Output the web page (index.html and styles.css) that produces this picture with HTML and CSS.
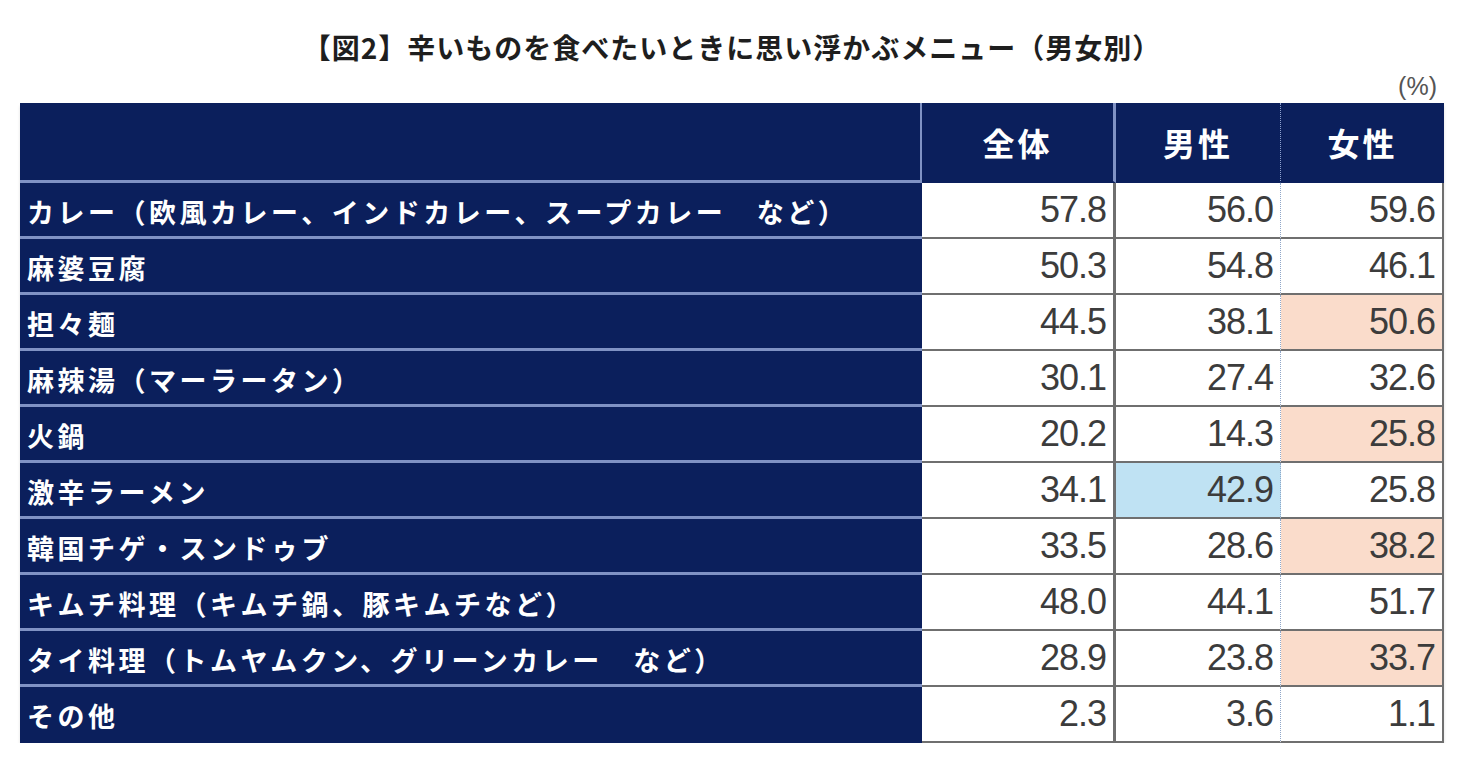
FILE: index.html
```html
<!DOCTYPE html>
<html lang="ja">
<head>
<meta charset="utf-8">
<title>辛いものを食べたいときに思い浮かぶメニュー（男女別）</title>
<link rel="stylesheet" href="styles.css">
</head>
<body>
<div class="page">
  <h1 class="title">【図2】辛いものを食べたいときに思い浮かぶメニュー（男女別）</h1>
  <div class="unit">(%)</div>
  <div class="grid">
    <div class="hd hd-label"></div>
    <div class="hd hd-all">全体</div>
    <div class="hd hd-m">男性</div>
    <div class="hd hd-f">女性</div>

    <div class="lb">カレー（欧風カレー、インドカレー、スープカレー　など）</div>
    <div class="nm all">57.8</div><div class="nm m">56.0</div><div class="nm f">59.6</div>

    <div class="lb">麻婆豆腐</div>
    <div class="nm all">50.3</div><div class="nm m">54.8</div><div class="nm f">46.1</div>

    <div class="lb">担々麺</div>
    <div class="nm all">44.5</div><div class="nm m">38.1</div><div class="nm f hi-f">50.6</div>

    <div class="lb">麻辣湯（マーラータン）</div>
    <div class="nm all">30.1</div><div class="nm m">27.4</div><div class="nm f">32.6</div>

    <div class="lb">火鍋</div>
    <div class="nm all">20.2</div><div class="nm m">14.3</div><div class="nm f hi-f">25.8</div>

    <div class="lb">激辛ラーメン</div>
    <div class="nm all">34.1</div><div class="nm m hi-m">42.9</div><div class="nm f">25.8</div>

    <div class="lb">韓国チゲ・スンドゥブ</div>
    <div class="nm all">33.5</div><div class="nm m">28.6</div><div class="nm f hi-f">38.2</div>

    <div class="lb">キムチ料理（キムチ鍋、豚キムチなど）</div>
    <div class="nm all">48.0</div><div class="nm m">44.1</div><div class="nm f">51.7</div>

    <div class="lb">タイ料理（トムヤムクン、グリーンカレー　など）</div>
    <div class="nm all">28.9</div><div class="nm m">23.8</div><div class="nm f hi-f">33.7</div>

    <div class="lb last">その他</div>
    <div class="nm all">2.3</div><div class="nm m">3.6</div><div class="nm f">1.1</div>
  </div>
</div>
</body>
</html>
```

FILE: styles.css
```css
html, body {
  margin: 0;
  padding: 0;
  background: #ffffff;
}

.page {
  width: 1424px;
  padding: 29px 0 0 20px;
  font-family: "Noto Sans CJK JP", "Noto Sans", sans-serif;
}

.title {
  margin: 0;
  font-size: 28px;
  line-height: 36px;
  font-weight: 700;
  letter-spacing: 1px;
  color: #1e1e1e;
  text-align: center;
}

.unit {
  margin-top: 7px;
  height: 31px;
  padding-right: 7px;
  text-align: right;
  font-family: "Liberation Sans", Arial, sans-serif;
  font-size: 25px;
  line-height: 28px;
  color: #555555;
}

.grid {
  display: grid;
  grid-template-columns: 902px 194px 165px 163px;
  grid-template-rows: 80px repeat(10, 56px);
  box-shadow: 0 3px 3px rgba(0, 0, 0, 0.12);
}

.hd {
  box-sizing: border-box;
  background: #0b1f5c;
  color: #ffffff;
  font-size: 32px;
  font-weight: 700;
  letter-spacing: 3px;
  display: flex;
  align-items: center;
  justify-content: center;
  border-bottom: 2px solid #0b1f5c;
}

.hd-label {
  border-right: 2px solid #8092c4;
  border-bottom: 3px solid #8092c4;
}

.hd-all {
  border-right: 3px solid #8092c4;
}

.hd-m {
  border-right: 1px dotted #8fa2cf;
}

.lb {
  box-sizing: border-box;
  background: #0b1f5c;
  color: #ffffff;
  font-size: 27px;
  font-weight: 700;
  letter-spacing: 3.5px;
  padding: 3px 0 0 7px;
  display: flex;
  align-items: center;
  white-space: nowrap;
  border-bottom: 3px solid #8092c4;
}

.lb.last {
  border-bottom: 2px solid #0b1f5c;
}

.nm {
  box-sizing: border-box;
  background: #ffffff;
  color: #3c3c3c;
  font-family: "Liberation Sans", Arial, sans-serif;
  font-size: 36px;
  letter-spacing: -1px;
  display: flex;
  align-items: center;
  justify-content: flex-end;
  padding-right: 7px;
  border-bottom: 2px solid #6f6f6f;
}

.nm.all {
  border-right: 3px solid #6f6f6f;
}

.nm.m {
  border-right: 1px dotted #8fa6c8;
}

.nm.f {
  border-right: 2px solid #6f6f6f;
}

.hi-f {
  background: #fadccb;
}

.hi-m {
  background: #bfe2f3;
}
```
